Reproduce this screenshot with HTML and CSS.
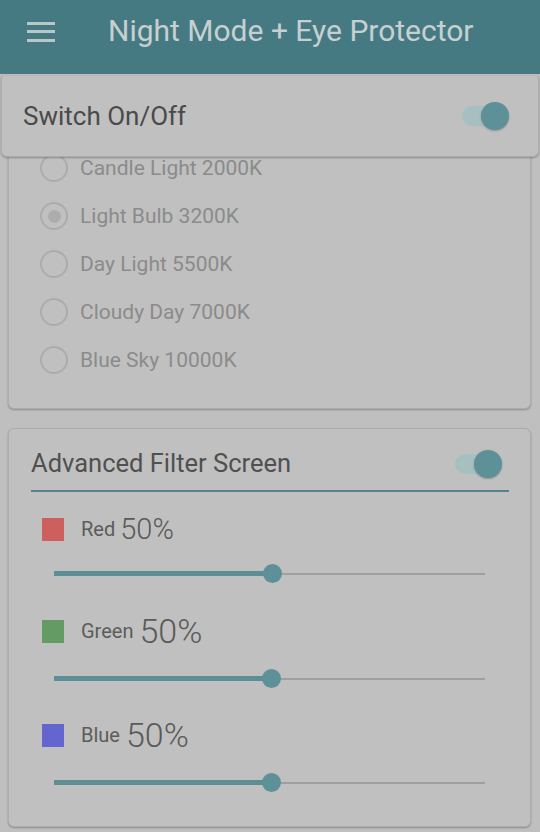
FILE: index.html
```html
<!DOCTYPE html>
<html lang="en">
<head>
<meta charset="utf-8">
<title>Night Mode + Eye Protector</title>
<link rel="stylesheet" href="styles.css">
</head>
<body>
<header class="appbar">
  <svg class="menu-icon" width="28" height="22" viewBox="0 0 28 22" aria-hidden="true">
    <rect x="0" y="1" width="28" height="3" fill="#b9c7c9"/>
    <rect x="0" y="9" width="28" height="3" fill="#b9c7c9"/>
    <rect x="0" y="18" width="28" height="3" fill="#b9c7c9"/>
  </svg>
  <h1 class="appbar-title">Night Mode + Eye Protector</h1>
</header>

<section class="card switch-card">
  <span class="switch-label">Switch On/Off</span>
  <span class="toggle toggle-main"><span class="toggle-track"></span><span class="toggle-thumb"></span></span>
</section>

<div class="scroll">
  <section class="card radio-card">
    <div class="radio-item"><span class="radio"></span><span class="radio-text">Candle Light 2000K</span></div>
    <div class="radio-item"><span class="radio checked"></span><span class="radio-text">Light Bulb 3200K</span></div>
    <div class="radio-item"><span class="radio"></span><span class="radio-text">Day Light 5500K</span></div>
    <div class="radio-item"><span class="radio"></span><span class="radio-text">Cloudy Day 7000K</span></div>
    <div class="radio-item"><span class="radio"></span><span class="radio-text">Blue Sky 10000K</span></div>
  </section>

  <section class="card adv-card">
    <div class="adv-head">
      <span class="adv-title">Advanced Filter Screen</span>
      <span class="toggle toggle-adv"><span class="toggle-track"></span><span class="toggle-thumb"></span></span>
    </div>
    <div class="adv-rule"></div>

    <div class="channel channel-red">
      <div class="channel-label">
        <span class="swatch swatch-red"></span>
        <span class="channel-name">Red</span>
        <span class="channel-value value-small">50%</span>
      </div>
      <div class="slider"><span class="slider-rail"></span><span class="slider-fill" style="width:50.6%"></span><span class="slider-thumb" style="left:50.6%"></span></div>
    </div>

    <div class="channel channel-green">
      <div class="channel-label">
        <span class="swatch swatch-green"></span>
        <span class="channel-name">Green</span>
        <span class="channel-value">50%</span>
      </div>
      <div class="slider slider-big"><span class="slider-rail"></span><span class="slider-fill" style="width:50.4%"></span><span class="slider-thumb" style="left:50.4%"></span></div>
    </div>

    <div class="channel channel-blue">
      <div class="channel-label">
        <span class="swatch swatch-blue"></span>
        <span class="channel-name">Blue</span>
        <span class="channel-value">50%</span>
      </div>
      <div class="slider slider-big"><span class="slider-rail"></span><span class="slider-fill" style="width:50.4%"></span><span class="slider-thumb" style="left:50.4%"></span></div>
    </div>
  </section>
</div>
</body>
</html>
```

FILE: styles.css
```css
* { box-sizing: border-box; }

html, body {
  margin: 0;
  padding: 0;
}

body {
  width: 540px;
  height: 832px;
  overflow: hidden;
  background: #bfbfbf;
  font-family: Roboto, "Noto Sans", "Liberation Sans", sans-serif;
  color: #4d4d4d;
}

.appbar {
  height: 74px;
  background: #467a82;
  display: flex;
  align-items: center;
  padding-left: 27px;
}

.menu-icon {
  display: block;
  margin-top: -11px;
}

.appbar-title {
  margin: -12px 0 0 53px;
  font-size: 30px;
  font-weight: 400;
  color: #c6d0d2;
  line-height: 1;
  letter-spacing: 0;
}

.card {
  background: #c0c0c0;
  border: 1px solid #adadad;
  border-radius: 6px;
  box-shadow: 0 1px 2px rgba(0, 0, 0, 0.28);
}

.switch-card {
  position: relative;
  z-index: 2;
  margin: 1px 1px 0;
  height: 82px;
  display: flex;
  align-items: center;
  justify-content: space-between;
  padding: 0 29px 0 21px;
  border-top-color: #b8b8b8;
  border-radius: 4px 4px 6px 6px;
}

.switch-label {
  font-size: 26px;
  color: #4a4a4a;
  line-height: 1;
}

.toggle {
  position: relative;
  width: 47px;
  height: 30px;
  display: block;
}

.toggle-track {
  position: absolute;
  left: 0;
  top: 5px;
  width: 44px;
  height: 20px;
  border-radius: 10px;
  background: #a8bfc2;
}

.toggle-thumb {
  position: absolute;
  right: 0;
  top: 1px;
  width: 28px;
  height: 28px;
  border-radius: 50%;
  background: #5e9098;
  box-shadow: 0 1px 2px rgba(0, 0, 0, 0.25);
}

.scroll {
  overflow: hidden;
  height: 675px;
}

.radio-card {
  margin: -14px 9px 0 8px;
  padding: 0 0 24px 31px;
  border-top-left-radius: 0;
  border-top-right-radius: 0;
}

.radio-item {
  height: 48px;
  display: flex;
  align-items: center;
}

.radio {
  width: 28px;
  height: 28px;
  border-radius: 50%;
  border: 2px solid #acacac;
  flex: none;
  display: flex;
  align-items: center;
  justify-content: center;
}

.radio.checked::after {
  content: "";
  width: 13px;
  height: 13px;
  border-radius: 50%;
  background: #adadad;
}

.radio-text {
  margin-left: 12px;
  font-size: 21px;
  color: #8b8b8b;
  line-height: 1;
}

.adv-card {
  margin: 19px 9px 0 8px;
  padding: 11px 21px 33px 22px;
}

.adv-head {
  height: 48px;
  display: flex;
  align-items: center;
  justify-content: space-between;
  padding-right: 7px;
}

.adv-title {
  font-size: 25.5px;
  color: #505050;
  line-height: 1;
}

.adv-rule {
  margin-top: 2px;
  height: 2px;
  background: #55838a;
}

.channel {
  margin-top: 31px;
}

.channel-red {
  margin-top: 21px;
}

.channel-blue {
  margin-top: 30px;
}

.channel-label {
  height: 32px;
  display: flex;
  align-items: center;
  padding-left: 11px;
}

.swatch {
  width: 22px;
  height: 23px;
  flex: none;
}

.swatch-red { background: #cd5f5f; }
.swatch-green { background: #649a64; }
.swatch-blue { background: #6565cf; }

.channel-name {
  margin-left: 17px;
  font-size: 20px;
  color: #5c5c5c;
  line-height: 1;
}

.channel-value {
  margin-left: 6px;
  font-size: 34px;
  font-weight: 300;
  color: #5a5a5a;
  line-height: 1;
}

.value-small {
  margin-left: 5px;
  font-size: 29px;
}

.slider {
  position: relative;
  height: 20px;
  margin: 19px 24px 0 23px;
}

.slider-big {
  margin-top: 22px;
}

.slider-rail {
  position: absolute;
  left: 0;
  right: 0;
  top: 9px;
  height: 2px;
  background: #9f9f9f;
}

.slider-fill {
  position: absolute;
  left: 0;
  top: 7px;
  height: 5px;
  background: #5d8e95;
}

.slider-thumb {
  position: absolute;
  top: 0;
  width: 19px;
  height: 19px;
  margin-left: -9px;
  border-radius: 50%;
  background: #5e9098;
}
```
